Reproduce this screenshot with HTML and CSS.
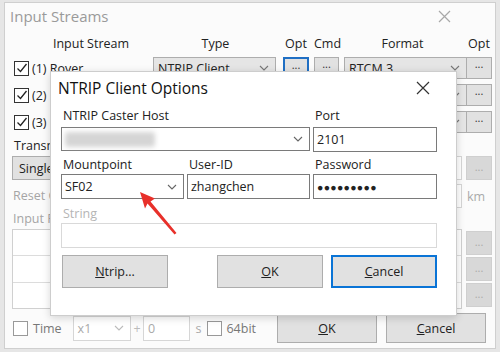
FILE: index.html
```html
<!DOCTYPE html>
<html>
<head>
<meta charset="utf-8">
<link rel="stylesheet" href="styles.css">
</head>
<body>
<div class="win">
  <div class="win-title">
    <span>Input Streams</span>
    <svg class="win-x" width="13" height="13" viewBox="0 0 13 13"><path d="M1 1L12 12M12 1L1 12" stroke="#a8a8a8" stroke-width="1.2"/></svg>
  </div>
  <div class="streams">
    <div class="hd hd1">Input Stream</div>
    <div class="hd">Type</div>
    <div class="hd">Opt</div>
    <div class="hd">Cmd</div>
    <div class="hd">Format</div>
    <div class="hd">Opt</div>

    <div class="name"><span class="chk on"><svg width="12" height="12" viewBox="0 0 12 12"><path d="M1.5 6.5L4.5 9.5L10.5 2" fill="none" stroke="#222" stroke-width="1.3"/></svg></span>(1) Rover</div>
    <div class="combo">NTRIP Client<svg class="chev" width="10" height="6" viewBox="0 0 10 6"><path d="M1 1L5 5L9 1" fill="none" stroke="#777" stroke-width="1.1"/></svg></div>
    <div class="dots focus">...</div>
    <div class="dots">...</div>
    <div class="combo">RTCM 3<svg class="chev" width="10" height="6" viewBox="0 0 10 6"><path d="M1 1L5 5L9 1" fill="none" stroke="#777" stroke-width="1.1"/></svg></div>
    <div class="dots">...</div>

    <div class="name"><span class="chk on"><svg width="12" height="12" viewBox="0 0 12 12"><path d="M1.5 6.5L4.5 9.5L10.5 2" fill="none" stroke="#222" stroke-width="1.3"/></svg></span>(2) Base</div>
    <div class="combo">NTRIP Client<svg class="chev" width="10" height="6" viewBox="0 0 10 6"><path d="M1 1L5 5L9 1" fill="none" stroke="#777" stroke-width="1.1"/></svg></div>
    <div class="dots">...</div>
    <div class="dots">...</div>
    <div class="combo">RTCM 3<svg class="chev" width="10" height="6" viewBox="0 0 10 6"><path d="M1 1L5 5L9 1" fill="none" stroke="#777" stroke-width="1.1"/></svg></div>
    <div class="dots">...</div>

    <div class="name"><span class="chk on"><svg width="12" height="12" viewBox="0 0 12 12"><path d="M1.5 6.5L4.5 9.5L10.5 2" fill="none" stroke="#222" stroke-width="1.3"/></svg></span>(3) Corr</div>
    <div class="combo">NTRIP Client<svg class="chev" width="10" height="6" viewBox="0 0 10 6"><path d="M1 1L5 5L9 1" fill="none" stroke="#777" stroke-width="1.1"/></svg></div>
    <div class="dots">...</div>
    <div class="dots">...</div>
    <div class="combo">RTCM 3<svg class="chev" width="10" height="6" viewBox="0 0 10 6"><path d="M1 1L5 5L9 1" fill="none" stroke="#777" stroke-width="1.1"/></svg></div>
    <div class="dots">...</div>
  </div>

  <div class="lower">
    <div class="lbl">Transmit NMEA</div>
    <div class="row-b">
      <div class="btn single">Single</div>
      <div class="right-pair"><div class="tbox"></div><div class="dots dis">...</div></div>
    </div>
    <div class="row-c">
      <div class="lbl gray">Reset Corr</div>
      <div class="right-pair"><div class="tbox"></div><span class="km">km</span></div>
    </div>
    <div class="lbl gray inputf">Input File</div>
    <div class="row-e">
      <div class="list"><div class="li"></div><div class="li"></div><div class="li"></div></div>
      <div class="side-btns"><div class="dots dis">...</div><div class="dots dis">...</div><div class="dots dis">...</div></div>
    </div>
    <div class="row-f">
      <span class="chk"></span><span class="t-time">Time</span>
      <div class="combo small gray">x1<svg class="chev" width="10" height="6" viewBox="0 0 10 6"><path d="M1 1L5 5L9 1" fill="none" stroke="#bbb" stroke-width="1.1"/></svg></div>
      <span class="plus">+</span>
      <div class="tbox zero">0</div>
      <span class="sec">s</span>
      <span class="chk"></span><span class="t-64">64bit</span>
      <div class="btn big"><u>O</u>K</div>
      <div class="btn big"><u>C</u>ancel</div>
    </div>
  </div>
</div>

<div class="dlg">
  <div class="dlg-title">
    <span>NTRIP Client Options</span>
    <svg width="14" height="14" viewBox="0 0 14 14"><path d="M1 1L13 13M13 1L1 13" stroke="#333" stroke-width="1.2"/></svg>
  </div>
  <div class="dlg-body">
    <div class="fields">
      <div class="f-lbl span2">NTRIP Caster Host</div>
      <div class="f-lbl">Port</div>
      <div class="input span2 host"><span class="blur"></span><svg class="chev" width="10" height="6" viewBox="0 0 10 6"><path d="M1 1L5 5L9 1" fill="none" stroke="#666" stroke-width="1.1"/></svg></div>
      <div class="input">2101</div>

      <div class="f-lbl l2">Mountpoint</div>
      <div class="f-lbl l2">User-ID</div>
      <div class="f-lbl l2">Password</div>
      <div class="input">SF02<svg class="chev" width="10" height="6" viewBox="0 0 10 6"><path d="M1 1L5 5L9 1" fill="none" stroke="#666" stroke-width="1.1"/></svg></div>
      <div class="input">zhangchen</div>
      <div class="input pwd">●●●●●●●●●</div>

      <div class="f-lbl span3 dis l3">String</div>
      <div class="input span3 str"></div>
    </div>
    <div class="dlg-btns">
      <div class="btn dbtn"><u>N</u>trip...</div>
      <div class="btn-grp">
        <div class="btn dbtn"><u>O</u>K</div>
        <div class="btn dbtn def"><u>C</u>ancel</div>
      </div>
    </div>
  </div>
</div>

<svg class="arrow" width="60" height="60" viewBox="0 0 60 60">
  <polygon points="1,1 16,7.5 11.5,10.5 37.5,42 35.5,43.5 8.5,12.5 6,17.5" fill="#e8302a"/>
</svg>
</body>
</html>
```

FILE: styles.css
```css
* { box-sizing: border-box; }
html, body { margin: 0; padding: 0; }
body {
  width: 500px; height: 352px; overflow: hidden;
  background: #e6e6e6;
  font-family: "Open Sans", "Noto Sans", sans-serif;
  font-size: 12px;
  color: #222;
  padding: 2px 4px 0 4px;
  position: relative;
}
.win {
  width: 492px; height: 347px;
  background: #fbfbfb;
  border: 1px solid #cfcfcf;
  padding: 0 0 0 9px;
}
.win-title {
  height: 29px;
  display: flex; align-items: center; justify-content: space-between;
  padding: 0 44px 3px 0;
  margin-left: -4px;
  font-size: 15px; color: #9a9a9a;
}
.streams {
  display: grid;
  grid-template-columns: 134px 125px 26px 25px 117px 26px;
  grid-template-rows: 17px 22px 22px 22px;
  column-gap: 5px; row-gap: 5px;
  margin-top: 3px;
}
.hd { text-align: center; font-size: 12.5px; line-height: 17px; color: #222; }
.hd1 { padding-left: 20px; }
.name { display: flex; align-items: center; white-space: nowrap; font-size: 12.5px; }
.chk {
  width: 15px; height: 15px; border: 1px solid #333; background: #fff;
  display: inline-flex; align-items: center; justify-content: center;
  margin-right: 3px; flex: none;
}
.combo {
  width: 123px; height: 22px;
  border: 1px solid #adadad; background: #e5e5e5;
  display: flex; align-items: center; justify-content: space-between;
  padding: 0 6px 0 4px; font-size: 12.5px;
}
.dots {
  border: 1px solid #adadad; background: #e1e1e1;
  display: flex; align-items: center; justify-content: center;
  font-size: 11px; color: #333; padding-bottom: 3px;
}
.streams .dots { align-items: flex-start; line-height: 11px; padding: 0; }
.dots.focus { border: 2px solid #1f6fc4; }
.dots.dis { color: #aaa; background: #d8d8d8; border-color: #cfcfcf; }

.lower { display: flex; flex-direction: column; }
.lbl { font-size: 12.5px; line-height: 16px; white-space: nowrap; }
.lower > .lbl:first-child { margin-top: 5px; }
.gray { color: #a5a5a5; }
.row-b { display: flex; justify-content: space-between; align-items: center; margin-top: 1px; height: 26px; padding-right: 3px; margin-left: -2px; }
.btn {
  background: #e1e1e1; border: 1px solid #adadad;
  display: flex; align-items: center; justify-content: center;
}
.single { width: 90px; height: 24px; justify-content: flex-start; padding-left: 6px; font-size: 12.5px; }
.right-pair { display: flex; align-items: center; gap: 4px; }
.right-pair .dots { width: 26px; height: 24px; }
.tbox { width: 24px; height: 24px; border: 1px solid #d6d6d6; background: #fff; }
.km { width: 26px; color: #aaa; font-size: 12.5px; padding-left: 1px; }
.row-c { display: flex; justify-content: space-between; align-items: center; margin-top: 3px; height: 24px; padding-right: 3px; margin-left: -1px; }
.inputf { margin-top: 3px; margin-left: -1px; }
.row-e { display: flex; justify-content: space-between; margin-top: 2px; padding-right: 3px; margin-left: -2px; }
.list { width: 450px; height: 80px; border: 1px solid #d0d0d0; background: #fff; display: flex; flex-direction: column; }
.li { flex: 1; border-bottom: 1px solid #dcdcdc; }
.li:last-child { border-bottom: 0; }
.side-btns { display: flex; flex-direction: column; gap: 2px; padding-top: 2px; }
.side-btns .dots { width: 26px; height: 24px; }

.row-f { display: flex; align-items: center; height: 30px; margin-top: 4px; margin-left: -1px; color: #777; font-size: 12.5px; }
.row-f .chk { border-color: #999; }
.t-time { margin-left: 2px; width: 40px; }
.combo.small { width: 59px; height: 25px; background: #fff; border-color: #d6d6d6; color: #aaa; }
.plus { color: #bbb; width: 12px; text-align: center; }
.zero { width: 47px; height: 25px; color: #aaa; padding-left: 4px; line-height: 23px; }
.sec { color: #aaa; width: 18px; text-align: center; }
.t-64 { margin-left: 1px; width: 51px; }
.btn.big { width: 101px; height: 30px; color: #222; margin-right: 9px; }

.dlg {
  position: absolute; left: 50px; top: 71px;
  width: 407px; height: 245px;
  background: #fff;
  border: 1px solid #cdcdcd;
  box-shadow: 0 2px 8px rgba(0,0,0,0.16);
}
.dlg-title {
  height: 31px;
  display: flex; align-items: center; justify-content: space-between;
  padding: 0 26px 0 7px;
  font-size: 15.5px; color: #111;
}
.dlg-body { padding: 5px 0 0 10px; }
.fields {
  display: grid;
  grid-template-columns: 123px 123px 124px;
  column-gap: 3px;
  width: 376px;
}
.span2 { grid-column: span 2; }
.span3 { grid-column: span 3; }
.f-lbl { font-size: 12.5px; line-height: 15px; padding-left: 2px; margin-bottom: 4px; }
.f-lbl.l2 { margin-top: 5px; margin-bottom: 2px; }
.f-lbl.l3 { margin-top: 7px; margin-bottom: 2px; }
.f-lbl.dis { color: #b5b5b5; }
.input {
  height: 25px; border: 1px solid #7a7a7a; background: #fff;
  display: flex; align-items: center; justify-content: space-between;
  padding: 0 6px 0 3px; font-size: 12.5px;
}
.host { height: 24px; }
.blur { width: 90px; height: 15px; background: #d5d5d5; filter: blur(2.5px); border-radius: 3px; }
.pwd { font-size: 10.5px; letter-spacing: 0.3px; justify-content: flex-start; padding-left: 3px; }
.str { border-color: #d9d9d9; }
.dlg-btns { display: flex; justify-content: space-between; margin-top: 7px; width: 376px; padding-left: 1px; }
.btn-grp { display: flex; gap: 8px; }
.dbtn { width: 106px; height: 33px; font-size: 12.5px; background: #e1e1e1; border-color: #adadad; }
.dbtn.def { border: 2px solid #0a74d6; }

.arrow { position: absolute; left: 139px; top: 191px; }
```
